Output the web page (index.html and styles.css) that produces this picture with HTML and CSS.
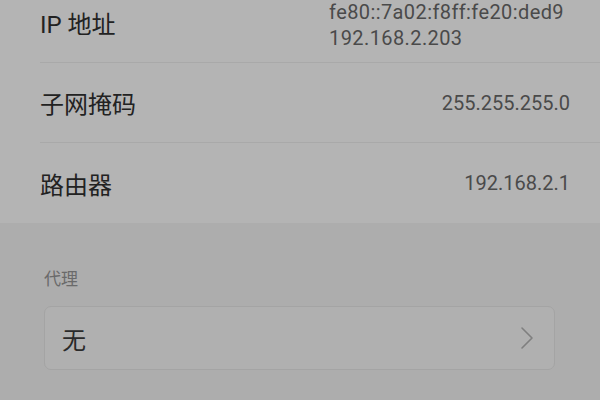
FILE: index.html
```html
<!DOCTYPE html>
<html lang="zh-CN">
<head>
  <meta charset="UTF-8">
  <meta name="viewport" content="width=device-width, initial-scale=1.0">
  <title>网络详情</title>
  <link rel="stylesheet" href="styles.css">
</head>
<body>
  <div class="info">
    <div class="row first">
      <span class="label">IP 地址</span>
      <div class="value multi">
        <div>fe80::7a02:f8ff:fe20:ded9</div>
        <div>192.168.2.203</div>
      </div>
    </div>
    <div class="row">
      <span class="label">子网掩码</span>
      <div class="value">255.255.255.0</div>
    </div>
    <div class="row">
      <span class="label">路由器</span>
      <div class="value">192.168.2.1</div>
    </div>
  </div>

  <div class="proxy">
    <div class="proxy-title">代理</div>
    <div class="select">
      <span>无</span>
      <svg class="chevron" width="14" height="24" viewBox="0 0 14 24">
        <path d="M2 2 L12 12 L2 22" fill="none" stroke="#7f7f7f" stroke-width="1.6" stroke-linecap="round" stroke-linejoin="round"/>
      </svg>
    </div>
  </div>
</body>
</html>
```

FILE: styles.css
```css
body {
  margin: 0;
  padding: 0;
  font-family: Roboto, "Noto Sans CJK SC", sans-serif;
  background-color: #adadad;
  overflow: hidden;
}

.info {
  background-color: #b4b4b4;
  padding-left: 40px;
  margin-top: -17px;
}

.row {
  display: flex;
  justify-content: space-between;
  align-items: center;
  height: 79px;
  border-bottom: 1px solid #a9a9a9;
  padding-right: 30px;
}

.row:last-child {
  border-bottom: none;
  height: 80px;
}

.label {
  font-size: 24px;
  color: #222;
}

.value {
  font-size: 20px;
  color: #4a4a4a;
}

.value.multi {
  line-height: 26px;
  padding: 5px 6px 0 0;
  letter-spacing: 0.4px;
}

.proxy {
  padding: 42px 45px 0 44px;
}

.proxy-title {
  font-size: 17px;
  color: #6a6a6a;
  margin-bottom: 16px;
}

.select {
  display: flex;
  justify-content: space-between;
  align-items: center;
  height: 62px;
  border: 1px solid #a4a4a4;
  border-radius: 7px;
  background-color: #b0b0b0;
  padding: 0 20px 0 17px;
  font-size: 24px;
  color: #2a2a2a;
}

.chevron {
  display: block;
}
```
